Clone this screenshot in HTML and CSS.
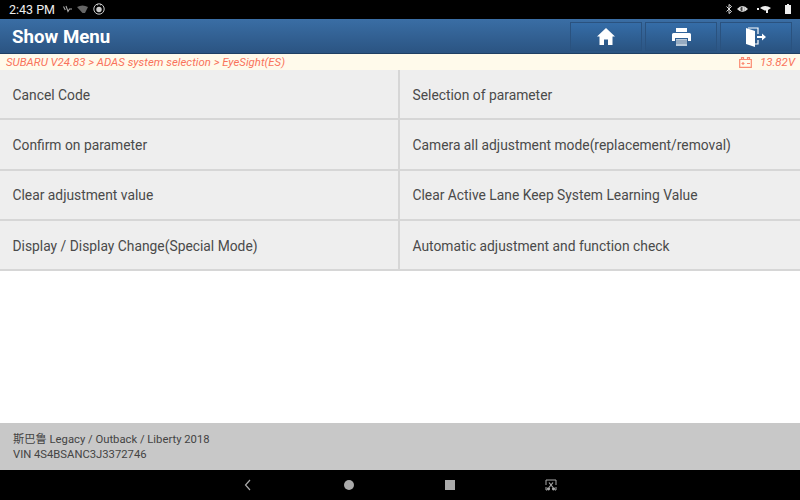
FILE: index.html
```html
<!DOCTYPE html>
<html lang="en">
<head>
<meta charset="utf-8">
<title>Show Menu</title>
<link rel="stylesheet" href="styles.css">
</head>
<body>
<div class="app">
  <div class="status">
    <div class="status-left">
      <span class="clock">2:43 PM</span>
      <svg width="9" height="9" viewBox="0 0 9 9"><path d="M.5 1.500l1.800 3.500M3 1l2 5.500L6.500 4H9" fill="none" stroke="#aaa" stroke-width="1.100"/></svg>
      <svg width="11" height="8" viewBox="0 0 11 8"><path d="M0 2Q5.500-1 11 2L8 8H5.500Z" fill="#666"/></svg>
      <svg width="12" height="12" viewBox="0 0 12 12"><circle cx="6" cy="6" r="5.200" fill="none" stroke="#ccc" stroke-width="1"/><circle cx="6" cy="6.500" r="2.700" fill="#ccc"/><path d="M4 1.800h1M7 1.800h1" stroke="#ccc"/></svg>
    </div>
    <div class="status-right">
      <svg width="6" height="10" viewBox="0 0 6 10"><path d="M.5 2.500l5 5L3 9.500V.5l2.500 2-5 5" fill="none" stroke="#ddd" stroke-width="1"/></svg>
      <svg width="11" height="8" viewBox="0 0 11 8"><path d="M0 4Q5.500-2 11 4 5.500 10 0 4Z" fill="#ddd"/><circle cx="5.500" cy="4" r="2.200" fill="#444"/><path d="M5.500 1.800a2.200 2.200 0 0 1 0 4.400Z" fill="#ddd"/></svg>
      <svg class="wifi" width="14" height="8" viewBox="0 0 14 8"><rect x="0" y="3" width="2" height="2" fill="#eee"/><path d="M3 3Q8-1 14 3L11 5V8H9V5.500H7.500Z" fill="#eee"/></svg>
      <svg class="batt" width="6" height="10" viewBox="0 0 6 10"><path d="M0 1h2V0h2v1h2v9H0Z" fill="#eee"/></svg>
    </div>
  </div>
  <header class="bar">
    <h1 class="title">Show Menu</h1>
    <div class="tools">
      <button class="tool"><svg width="18" height="17" viewBox="0 0 18 17"><path d="M9 0l9 8.500h-2.500V17H11v-5.500H7V17H2.500V8.500H0Z" fill="#fff"/></svg></button>
      <button class="tool"><svg width="19" height="18" viewBox="0 0 19 18"><path d="M4 0h11v4H4Z" fill="#fff"/><path d="M1.500 5h16q1.500 0 1.500 1.500V13h-3v-3H3v3H0V6.500Q0 5 1.500 5Z" fill="#fff"/><path d="M4 11h11v7H4Z" fill="#b9c9d8"/><path d="M4 13h11M4 15h11" stroke="#5f7f9f" stroke-width=".8"/></svg></button>
      <button class="tool"><svg width="20" height="20" viewBox="0 0 20 20"><path d="M0 1l9 3v16l-9-3Z" fill="#fff"/><path d="M2 1h10v6M12 13v4H9" fill="none" stroke="#fff" stroke-width="1.200"/><path d="M11 9h5V6.500l4 3.500-4 3.500V11h-5Z" fill="#fff"/></svg></button>
    </div>
  </header>
  <div class="crumb">
    <span>SUBARU V24.83 &gt; ADAS system selection &gt; EyeSight(ES)</span>
    <span class="volt">
      <svg width="13" height="11" viewBox="0 0 13 11"><path d="M.7 2.500h11.600v7.800H.7ZM2.500 2.500V.7h2v1.800M8.500 2.500V.7h2v1.800M2.500 6.500h3M4 5v3M8 6.500h3" fill="none" stroke="#fb8a72" stroke-width="1.200"/></svg>
      <span class="volt-text">13.82V</span>
    </span>
  </div>
  <main class="grid">
    <div class="cell">Cancel Code</div>
    <div class="cell">Selection of parameter</div>
    <div class="cell">Confirm on parameter</div>
    <div class="cell">Camera all adjustment mode(replacement/removal)</div>
    <div class="cell">Clear adjustment value</div>
    <div class="cell">Clear Active Lane Keep System Learning Value</div>
    <div class="cell">Display / Display Change(Special Mode)</div>
    <div class="cell">Automatic adjustment and function check</div>
  </main>
  <footer class="info">
    <div>斯巴鲁 Legacy / Outback / Liberty 2018</div>
    <div>VIN 4S4BSANC3J3372746</div>
  </footer>
  <nav class="nav">
    <svg width="8" height="12" viewBox="0 0 8 12"><path d="M6 1L1.500 6 6 11" fill="none" stroke="#aaa" stroke-width="1.200"/></svg>
    <span class="dot"></span>
    <span class="square"></span>
    <svg width="12" height="12" viewBox="0 0 12 12"><path d="M1 6V1h10v5M1 8v3h1M11 8v3h-1" fill="none" stroke="#aaa" stroke-width="1"/><path d="M4 3.500l4 5M8 3.500l-4 5" stroke="#aaa" stroke-width="1.200"/><circle cx="3.500" cy="9.800" r="1.600" fill="#aaa"/><circle cx="8.500" cy="9.800" r="1.600" fill="#aaa"/></svg>
  </nav>
</div>
</body>
</html>
```
FILE: styles.css
```css
* { box-sizing: border-box; }
html, body { margin: 0; padding: 0; }
body { font-family: Roboto, "Noto Sans CJK SC", sans-serif; }
.app { width: 800px; height: 500px; display: flex; flex-direction: column; background: #fff; overflow: hidden; }
.status { height: 19px; background: #000; display: flex; justify-content: space-between; align-items: center; padding: 0 9px 1px 9px; flex: none; }
.status-left, .status-right { display: flex; align-items: center; }
.status-left { gap: 5px; }
.status-right { gap: 5px; }
.clock { color: #eee; font-size: 12.500px; margin-right: 3px; }
.batt { margin-left: 9px; }
.wifi { margin-left: 4px; }
.bar { height: 35px; flex: none; background: linear-gradient(#3a6ea5, #2b5482); display: flex; justify-content: space-between; align-items: center; padding: 0 8px 0 12px; border-bottom: 1px solid #1f3f63; }
.title { margin: 0; padding-top: 2px; color: #fff; font-size: 18.700px; font-weight: 700; }
.tools { display: flex; gap: 3px; align-self: flex-start; padding-top: 3px; }
.tool { width: 72px; height: 29px; padding: 0; display: flex; align-items: center; justify-content: center; border: 1px solid #2a527f; background: linear-gradient(#356da8, #2a5482); }
.crumb { height: 16px; flex: none; background: #fffaeb; color: #f9735b; font-size: 11.400px; font-style: italic; display: flex; justify-content: space-between; align-items: center; padding: 0 5px 0 6px; }
.volt { display: flex; align-items: center; gap: 8px; font-size: 11.500px; }
.grid { display: grid; grid-template-columns: 400px 400px; grid-auto-rows: 50.300px; flex: none; height: 202px; }
.cell { background: #eee; color: #4a4a4a; font-size: 13.830px; display: flex; align-items: center; padding-left: 12.500px; padding-top: 1px; border-bottom: 2px solid #d6d6d6; }
.cell:nth-child(odd) { border-right: 2px solid #d6d6d6; }
.info { margin-top: auto; height: 47px; flex: none; background: #c8c8c8; color: #444; font-size: 11.250px; line-height: 15px; padding: 9px 13px 0; }
.nav { height: 30px; flex: none; background: #000; display: flex; align-items: center; padding-left: 244px; }
.dot { width: 10px; height: 10px; border-radius: 50%; background: #aaa; margin-left: 92px; }
.square { width: 10px; height: 10px; background: #aaa; margin-left: 91px; }
.nav svg:last-child { margin-left: 90px; }
```
